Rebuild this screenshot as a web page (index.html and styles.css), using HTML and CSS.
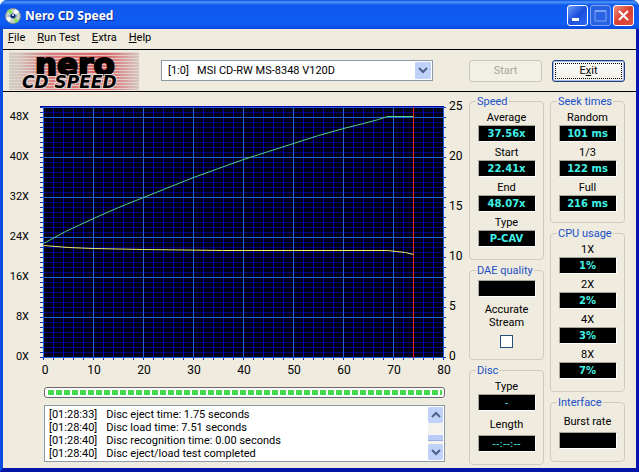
FILE: index.html
```
<!DOCTYPE html>
<html lang="en">
<head>
<meta charset="utf-8">
<title>Nero CD Speed</title>
<link rel="stylesheet" href="styles.css">
</head>
<body>
<div class="window">

<header class="titlebar">
  <svg class="app-icon" width="16" height="16" viewBox="0 0 16 16">
    <circle cx="8" cy="8" r="7.5" fill="#c9d3cf" stroke="#7b8a86"/>
    <path d="M8 8L2 3A8 8 0 0 1 6 1z" fill="#8be05a"/>
    <path d="M8 8L14 13A8 8 0 0 1 10 15z" fill="#8be05a"/>
    <path d="M8 8L10 1A8 8 0 0 1 14 4z" fill="#fff"/>
    <path d="M8 8L1 10A8 8 0 0 0 4 14z" fill="#fff"/>
    <path d="M3 8Q8 3 13 8Q8 12 3 8z" fill="#8aa6c8"/>
    <circle cx="8" cy="8" r="2.5" fill="#12306e"/>
    <circle cx="8" cy="7" r="1" fill="#fff"/>
  </svg>
  <h1>Nero CD Speed</h1>
  <button class="caption" aria-label="Minimize"><svg width="19" height="19"><rect x="4" y="12" width="7" height="3" fill="#fff"/></svg></button>
  <button class="caption dim" aria-label="Maximize" disabled><svg width="19" height="19"><path d="M4 5h11v10H4z" fill="none" stroke="#7ba2f0"/><rect x="4" y="4" width="11" height="2" fill="#7ba2f0"/></svg></button>
  <button class="caption close" aria-label="Close"><svg width="19" height="19"><path d="M5 5l9 9M14 5l-9 9" stroke="#fff" stroke-width="2"/></svg></button>
</header>

<nav class="menu">
  <a href="#"><u>F</u>ile</a>
  <a href="#"><u>R</u>un Test</a>
  <a href="#"><u>E</u>xtra</a>
  <a href="#"><u>H</u>elp</a>
</nav>

<div class="toolbar">
  <svg class="logo" width="130" height="38" viewBox="0 0 130 38" role="img" aria-label="Nero CD Speed">
    <defs>
      <linearGradient id="fade">
        <stop offset="0" stop-color="#d0ccc4"/>
        <stop offset=".08" stop-color="#d4c4bc"/>
        <stop offset=".3" stop-color="#dc7a7c"/>
        <stop offset=".75" stop-color="#dc6568"/>
        <stop offset="1" stop-color="#d6c8c2"/>
      </linearGradient>
      <pattern id="lines" width="3" height="3" patternUnits="userSpaceOnUse">
        <rect width="3" height="1" fill="#e4dcd6" fill-opacity=".8"/>
      </pattern>
    </defs>
    <rect width="130" height="38" fill="url(#fade)"/>
    <rect width="130" height="38" fill="url(#lines)"/>
    <text class="logo-name" x="26" y="23">nero</text>
    <text class="logo-sub" x="13" y="36">CD SPEED</text>
  </svg>
  <div class="drive">
    <select aria-label="Drive">
      <option>[1:0]&nbsp;&nbsp; MSI CD-RW MS-8348 V120D</option>
    </select>
    <svg width="16" height="17" viewBox="0 0 16 17"><rect width="16" height="17" rx="1" fill="#c1d2fa"/><path d="M4 6l4 4 4-4" fill="none" stroke="#4d6185" stroke-width="2"/></svg>
  </div>
  <div class="actions">
    <button class="push" disabled>Start</button>
    <button class="push default">E<u>x</u>it</button>
  </div>
</div>

<main>
<section class="test">
  <!-- plot area is 400x250: 5 units per minute, 5 units per X -->
  <svg class="chart" viewBox="-40 -15 460 288" role="img" aria-label="Transfer rate graph">
    <rect y="-1" width="401" height="252" fill="#000014"/>
    <!-- ticks and grid: each dash is one line -->
    <g stroke="#1034b0">
      <path d="M-1.5 0V251" stroke-width="3" stroke-dasharray="1 4"/>
      <path d="M402 0V251" stroke-width="2" stroke-dasharray="1 9"/>
      <path d="M0 252H401" stroke-width="2" stroke-dasharray="1 9"/>
    </g>
    <path d="M200.5 0V251" stroke="#000088" stroke-width="401" stroke-dasharray="1 4"/>
    <path d="M0 125.5H401" stroke="#0000b0" stroke-width="251" stroke-dasharray="1 9"/>
    <g stroke="#2060e0">
      <path d="M200.5 10V251" stroke-width="401" stroke-dasharray="1 39"/>
      <path d="M0 125.5H401" stroke-width="251" stroke-dasharray="1 49"/>
    </g>
    <rect x="-3" y="-1" width="404" height="1" fill="#0000a0"/>
    <rect width="401" height="1" fill="#2060e0"/>
    <rect x="370" width="1" height="251" fill="#e82020"/>
    <g class="curves" transform="translate(.5 .5)">
      <polyline class="speed" points="0,136 22,124 50,111 75,100 100,90 120,82 150,70 175,61 200,52 225,44 250,36 275,28 300,21 320,16 335,12 344,9 370,9"/>
      <polyline class="rpm" points="0,138 25,140 50,141 100,142 180,143 344,143 353,144 362,145 370,147"/>
    </g>
    <g class="left">
      <text x="-14" y="13">48X</text>
      <text x="-14" y="53">40X</text>
      <text x="-14" y="93">32X</text>
      <text x="-14" y="133">24X</text>
      <text x="-14" y="173">16X</text>
      <text x="-14" y="213">8X</text>
      <text x="-14" y="253">0X</text>
    </g>
    <g class="right">
      <text x="406" y="3">25</text>
      <text x="406" y="53">20</text>
      <text x="406" y="103">15</text>
      <text x="406" y="153">10</text>
      <text x="406" y="203">5</text>
      <text x="406" y="253">0</text>
    </g>
    <g class="bottom">
      <text x="2" y="267">0</text>
      <text x="51" y="267">10</text>
      <text x="101" y="267">20</text>
      <text x="151" y="267">30</text>
      <text x="201" y="267">40</text>
      <text x="251" y="267">50</text>
      <text x="301" y="267">60</text>
      <text x="351" y="267">70</text>
      <text x="401" y="267">80</text>
    </g>
  </svg>

  <progress value="100" max="100" aria-label="Test progress"></progress>

  <div class="log">
    <ul>
      <li><time>[01:28:33]</time>Disc eject time: 1.75 seconds</li>
      <li><time>[01:28:40]</time>Disc load time: 7.51 seconds</li>
      <li><time>[01:28:40]</time>Disc recognition time: 0.00 seconds</li>
      <li><time>[01:28:40]</time>Disc eject/load test completed</li>
    </ul>
    <div class="scroll">
      <button aria-label="Scroll up"><svg width="15" height="16"><path d="M4 10l4-4 4 4" fill="none" stroke="#4d6185" stroke-width="2"/></svg></button>
      <span class="thumb"></span>
      <button aria-label="Scroll down"><svg width="15" height="16"><path d="M4 6l4 4 4-4" fill="none" stroke="#4d6185" stroke-width="2"/></svg></button>
    </div>
  </div>
</section>

<div class="column">
  <fieldset>
    <legend>Speed</legend>
    <label for="avg">Average</label><output id="avg">37.56x</output>
    <label for="start">Start</label><output id="start">22.41x</output>
    <label for="end">End</label><output id="end">48.07x</output>
    <label for="type">Type</label><output id="type">P-CAV</output>
  </fieldset>
  <fieldset class="dae">
    <legend>DAE quality</legend>
    <output aria-label="DAE quality"></output>
    <label for="accurate">Accurate Stream</label>
    <input type="checkbox" id="accurate">
  </fieldset>
  <fieldset class="disc">
    <legend>Disc</legend>
    <label for="dtype">Type</label><output id="dtype">-</output>
    <label for="length">Length</label><output id="length">--:--:--</output>
  </fieldset>
</div>

<div class="column">
  <fieldset class="seek">
    <legend>Seek times</legend>
    <label for="random">Random</label><output id="random">101 ms</output>
    <label for="third">1/3</label><output id="third">122 ms</output>
    <label for="full">Full</label><output id="full">216 ms</output>
  </fieldset>
  <fieldset>
    <legend>CPU usage</legend>
    <label for="cpu1">1X</label><output id="cpu1">1%</output>
    <label for="cpu2">2X</label><output id="cpu2">2%</output>
    <label for="cpu4">4X</label><output id="cpu4">3%</output>
    <label for="cpu8">8X</label><output id="cpu8">7%</output>
  </fieldset>
  <fieldset class="interface">
    <legend>Interface</legend>
    <label for="burst">Burst rate</label><output id="burst"></output>
  </fieldset>
</div>
</main>

</div>
</body>
</html>
```
FILE: styles.css
```
* {
  box-sizing: border-box;
}
body {
  margin: 0;
  background: #fff;
  font: 11px/14px "Roboto", "Liberation Sans", sans-serif;
  color: #000;
}
button, select {
  font: inherit;
  padding: 0;
}
.window {
  min-height: 100vh;
  display: flex;
  flex-direction: column;
  background: #efebde;
  border: solid #0a4be0;
  border-width: 0 3px 4px;
  border-right-color: #0414b0;
  border-bottom-color: #0414a8;
  border-radius: 7px 7px 0 0;
}

.titlebar {
  height: 29px;
  margin: 0 -3px;
  padding: 2px 5px 0;
  display: flex;
  align-items: center;
  gap: 2px;
  background: linear-gradient(#0a4be0, #4c98f8 2px, #0f58ee 5px, #0f5cf4 24px, #0a48dc);
  border-radius: 7px 7px 0 0;
}
.titlebar h1 {
  flex: 1;
  margin: 0 0 0 2px;
  font: bold 12px/16px "Noto Sans", sans-serif;
  color: #fff;
  text-shadow: 1px 1px #0a2a90;
}
.caption {
  width: 21px;
  height: 21px;
  border: 1px solid #fff;
  border-radius: 3px;
  background: linear-gradient(135deg, #6c9cf8, #1c50dc 50%, #2c68f0);
}
.caption svg {
  display: block;
}
.caption.dim {
  border-color: #7ba2f0;
  background: #2a62e4;
}
.caption.close {
  background: linear-gradient(135deg, #f09080, #d84030 50%, #e05040);
}

.menu {
  display: flex;
  gap: 12px;
  height: 21px;
  padding: 2px 5px;
  border-bottom: 1px solid #000;
}
.menu a {
  color: #000;
  text-decoration: none;
}

.toolbar {
  display: flex;
  align-items: center;
  height: 42px;
  padding: 0 11px 0 6px;
  border-bottom: 1px solid #000;
}
.logo {
  overflow: visible;
}
.logo-name {
  font: bold 31px "DejaVu Sans", sans-serif;
  stroke: #000;
  stroke-width: 2px;
}
.logo-sub {
  font: italic bold 17px "DejaVu Sans", sans-serif;
  stroke: #e8dcd8;
  stroke-width: 2px;
  paint-order: stroke;
}
.drive {
  flex: 1;
  display: flex;
  align-items: center;
  height: 21px;
  margin: 0 36px 0 22px;
  padding: 0 1px 0 0;
  background: #fff;
  border: 1px solid #8a9aa8;
}
.drive select {
  flex: 1;
  appearance: none;
  border: 0;
  padding-left: 6px;
  background: none;
  color: #000;
}
.actions {
  display: flex;
  gap: 10px;
}
.push {
  width: 73px;
  height: 22px;
  border: 1px solid #20407c;
  border-radius: 3px;
  background: linear-gradient(#fff, #f0eee6);
  color: #000;
}
.push:disabled {
  border-color: #c9c7ba;
  background: #f2efe6;
  color: #a8a698;
}
.push.default {
  outline: 1px dotted #000;
  outline-offset: -4px;
  box-shadow: inset 0 0 0 1px #a8bce8;
}

main {
  flex: 1;
  display: flex;
  gap: 6px;
  padding-right: 11px;
}
.test {
  flex: 1;
}
.chart {
  display: block;
  width: 100%;
}
.curves {
  fill: none;
}
.speed {
  stroke: #50d880;
}
.rpm {
  stroke: #f0f060;
}
.left {
  text-anchor: end;
}
.right, .bottom {
  font-size: 12px;
}
.bottom {
  text-anchor: middle;
}
progress {
  appearance: none;
  display: block;
  width: calc(100% - 59px);
  height: 11px;
  margin: 7px 18px 7px 41px;
  padding: 2px;
  background: #fff;
  border: 1px solid #706870;
  border-radius: 3px;
}
progress::-webkit-progress-bar {
  background: none;
}
progress::-webkit-progress-value {
  background: repeating-linear-gradient(90deg, #fff 0 1px, #48d850 1px 7px, #fff 7px 8px);
}
.log {
  display: flex;
  height: 57px;
  margin: 0 18px 0 41px;
  padding: 1px;
  background: #fff;
  border: 1px solid #8a9aa8;
}
.log ul {
  flex: 1;
  margin: 0;
  padding: 1px 3px;
  list-style: none;
  line-height: 13px;
}
.log time {
  margin-right: 9px;
}
.scroll {
  display: flex;
  flex-direction: column;
  width: 15px;
  background: #f4f3ee;
}
.scroll button {
  height: 16px;
  border: 0;
  border-radius: 2px;
  background: #c1d2fa;
}
.scroll svg {
  display: block;
}
.thumb {
  height: 6px;
  margin: auto 0 3px;
  background: #b8ccf8;
  border-bottom: 1px solid #98b0e0;
}

.column {
  display: flex;
  flex-direction: column;
  gap: 4px;
  width: 75px;
  padding-top: 3px;
}
fieldset {
  display: flex;
  flex-direction: column;
  align-items: center;
  min-width: 0;
  margin: 0;
  padding: 3px 0 12px;
  border: 1px solid #d0ccbc;
  border-radius: 4px;
}
legend {
  margin-left: 6px;
  padding: 0 1px;
  line-height: 13px;
  color: #2050c8;
  white-space: nowrap;
}
fieldset label {
  text-align: center;
}
output {
  width: 58px;
  height: 17px;
  margin-bottom: 4px;
  background: #000;
  color: #40f0e8;
  border: 1px solid;
  border-color: #a8a698 #fff #fff #a8a698;
  font: bold 10px/15px "DejaVu Sans", sans-serif;
  text-align: center;
}
output:last-child {
  margin-bottom: 0;
}
.seek {
  padding-bottom: 10px;
}
.dae {
  padding-bottom: 11px;
}
.dae output {
  margin-bottom: 6px;
}
.dae label {
  width: 58px;
  line-height: 13px;
}
.dae input {
  appearance: none;
  width: 13px;
  height: 13px;
  margin: 6px 0 0;
  background: #fff;
  border: 1px solid #20507c;
}
.disc output {
  font-weight: normal;
}
.disc output + label, .interface label {
  margin: 3px 0;
}
```
